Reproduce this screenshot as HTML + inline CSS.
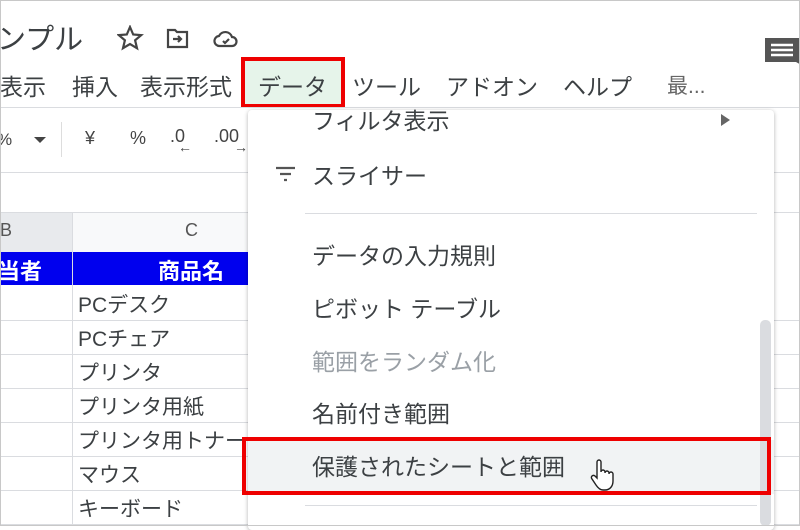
<!DOCTYPE html><html><head><meta charset="utf-8"><style>
body{margin:0;width:800px;height:526px;overflow:hidden;background:#fff;font-family:"Liberation Sans","Noto Sans CJK JP",sans-serif;position:relative;color:#202124}
.a{position:absolute;white-space:nowrap}
.m{font-size:23px;top:68px;color:#3c4043}
.hl{position:absolute;left:0;width:800px;height:1px;background:#dadce0}
.cell{position:absolute;left:78px;font-size:21px;color:#3c4043}
.mi{position:absolute;left:312px;font-size:23px;color:#3c4043}
</style></head><body>
<div style="position:absolute;inset:0;border:1px solid #c8c8c8;z-index:20;pointer-events:none"></div>
<div class="a" style="left:-3px;top:16px;font-size:29px;color:#3c4043">ンプル</div>
<svg class="a" style="left:117px;top:25px" width="130" height="28" viewBox="0 0 130 28" fill="none" stroke="#444" stroke-width="2.2">
<path d="M13 2l3.2 7.5 8 .6-6.1 5.2 1.9 7.9L13 19l-7 4.2 1.9-7.9L1.8 10.1l8-.6z"/>
<path d="M51 5h7l2 2h10v15H51z"/><path d="M56 14h8M61 11l3 3-3 3"/>
<path d="M103 21a5 5 0 0 1-1-10 7 7 0 0 1 13 1 4.5 4.5 0 0 1 0 9z"/><path d="M106 16l2 2 4-4"/>
</svg>
<svg class="a" style="left:764px;top:36px" width="36" height="34" viewBox="0 0 36 34"><path d="M1 2h34v22l4 6-7-4H1z" fill="#555"/><path d="M7 9h22M7 14h22M7 19h22" stroke="#fff" stroke-width="2.5"/></svg>
<div class="a" style="left:241px;top:57px;width:96px;height:43px;background:#e6f4ea;border:4px solid #e00"></div>
<div class="a m" style="left:0">表示</div>
<div class="a m" style="left:72px">挿入</div>
<div class="a m" style="left:140px">表示形式</div>
<div class="a m" style="left:258px">データ</div>
<div class="a m" style="left:352px">ツール</div>
<div class="a m" style="left:446px">アドオン</div>
<div class="a m" style="left:563px">ヘルプ</div>
<div class="a m" style="left:667px;color:#666;font-size:21px;top:70px">最...</div>
<div class="hl" style="top:107px"></div>
<div class="a" style="left:-3px;top:130px;font-size:17px;color:#444">%</div>
<div class="a" style="left:34px;top:137px;width:0;height:0;border:6px solid transparent;border-top:6px solid #444"></div>
<div class="a" style="left:61px;top:122px;width:1px;height:35px;background:#ddd"></div>
<div class="a" style="left:85px;top:128px;font-size:18px;color:#444">¥</div>
<div class="a" style="left:130px;top:128px;font-size:18px;color:#444">%</div>
<div class="a" style="left:170px;top:126px;font-size:18px;color:#444">.0<span style="display:block;font-size:14px;margin:-8px 0 0 8px">←</span></div>
<div class="a" style="left:214px;top:126px;font-size:18px;color:#444">.00<span style="display:block;font-size:14px;margin:-8px 0 0 20px">→</span></div>
<div class="hl" style="top:172px"></div>
<div class="hl" style="top:212px"></div>
<div class="a" style="left:0;top:213px;width:72px;height:39px;background:#e8eaed"></div>
<div class="a" style="left:73px;top:213px;width:175px;height:39px;background:#f8f9fa"></div>
<div class="a" style="left:0;top:220px;font-size:18px;color:#555">B</div>
<div class="a" style="left:185px;top:220px;font-size:18px;color:#555">C</div>
<div class="a" style="left:0;top:252px;width:248px;height:33px;background:#0000ee"></div>
<div class="a" style="left:-2px;top:254px;font-size:22px;color:#fff;font-weight:bold">当者</div>
<div class="a" style="left:158px;top:254px;font-size:22px;color:#fff;font-weight:bold">商品名</div>
<div class="hl" style="top:320px"></div><div class="hl" style="top:354px"></div><div class="hl" style="top:388px"></div><div class="hl" style="top:422px"></div><div class="hl" style="top:456px"></div><div class="hl" style="top:490px"></div><div class="hl" style="top:524px"></div>
<div class="a" style="left:72px;top:213px;width:1px;height:313px;background:#dadce0"></div>
<div class="cell" style="top:289px">PCデスク</div>
<div class="cell" style="top:323px">PCチェア</div>
<div class="cell" style="top:357px">プリンタ</div>
<div class="cell" style="top:391px">プリンタ用紙</div>
<div class="cell" style="top:425px">プリンタ用トナー</div>
<div class="cell" style="top:459px">マウス</div>
<div class="cell" style="top:493px">キーボード</div>
<div class="a" style="left:248px;top:110px;width:526px;height:420px;background:#fff;box-shadow:0 1px 4px rgba(0,0,0,.3);border-radius:4px;overflow:hidden">
<div class="a" style="left:0;top:330px;width:526px;height:54px;background:#f1f3f4"></div>
</div>
<div class="mi" style="top:102px">フィルタ表示</div>
<div class="a" style="left:721px;top:114px;width:0;height:0;border:6px solid transparent;border-left:9px solid #666;border-right:0"></div>
<svg class="a" style="left:275px;top:165px" width="22" height="18"><path d="M1 3h19M5 9h11M9 15h3" stroke="#555" stroke-width="2.2"/></svg>
<div class="mi" style="top:157px">スライサー</div>
<div class="a" style="left:305px;top:213px;width:452px;height:1px;background:#dadce0"></div>
<div class="mi" style="top:237px">データの入力規則</div>
<div class="mi" style="top:290px">ピボット テーブル</div>
<div class="mi" style="top:343px;color:#9aa0a6">範囲をランダム化</div>
<div class="mi" style="top:395px">名前付き範囲</div>
<div class="mi" style="top:448px">保護されたシートと範囲</div>
<div class="a" style="left:305px;top:505px;width:452px;height:1px;background:#dadce0"></div>
<div class="a" style="left:760px;top:320px;width:11px;height:206px;background:#dadce0;border-radius:5px"></div>
<div class="a" style="left:242px;top:437px;width:521px;height:50px;border:4px solid #e00"></div>
<svg class="a" style="left:590px;top:458px" width="24" height="34" viewBox="0 0 24 34"><path d="M7 20V4a2 2 0 0 1 4 0v10a2 2 0 0 1 4 0v1a2 2 0 0 1 4 0v1a2 2 0 0 1 4 0v7c0 5-3 9-8 9h-2c-3 0-5-2-7-5l-4-6a2 2 0 0 1 3-3z" fill="#fff" stroke="#222" stroke-width="1.4"/></svg>
</body></html>
